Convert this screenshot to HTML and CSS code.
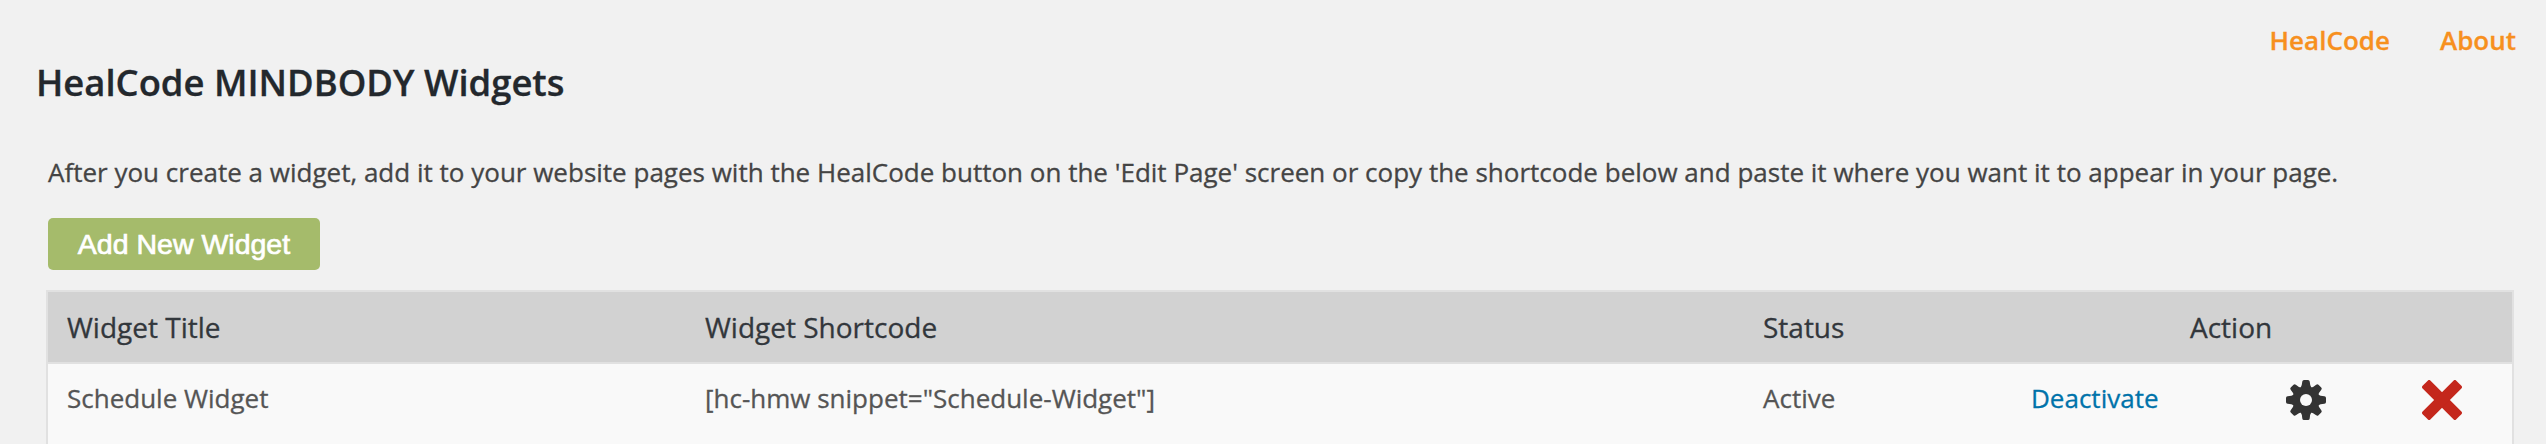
FILE: index.html
```
<!DOCTYPE html>
<html lang="en"><head><meta charset="utf-8"><title>HealCode MINDBODY Widgets</title><link rel="stylesheet" href="styles.css"></head>
<body>
<header class="header"><h1 class="title">HealCode MINDBODY Widgets</h1><nav class="nav"><a href="#">HealCode</a><a href="#">About</a></nav></header>
<main class="main">
<p class="intro">After you create a widget, add it to your website pages with the HealCode button on the 'Edit Page' screen or copy the shortcode below and paste it where you want it to appear in your page.</p>
<a class="add" href="#">Add New Widget</a>
<section class="table">
<div class="row head"><span>Widget Title</span><span>Widget Shortcode</span><span>Status</span><span class="action">Action</span></div>
<div class="row item"><span>Schedule Widget</span><span>[hc-hmw snippet="Schedule-Widget"]</span><span>Active</span><a class="deactivate" href="#">Deactivate</a>
<svg class="icon" viewBox="-20 -20 40 40"><g fill="#333"><circle r="13.6"/><g id="teeth"><path id="tooth" d="M-5.5 -12Q-4 -14 -3.7 -18.4Q-3.5 -20 -2 -20H2Q3.5 -20 3.7 -18.4Q4 -14 5.5 -12V0H-5.5Z"/><use href="#tooth" transform="rotate(90)"/><use href="#tooth" transform="rotate(180)"/><use href="#tooth" transform="rotate(270)"/></g><use href="#teeth" transform="rotate(45) scale(.98)"/></g><circle r="6" fill="#f9f9f9"/></svg>
<svg class="icon" viewBox="-20 -20 40 40"><g fill="#c4271c" transform="rotate(45)"><rect x="-23.8" y="-5.6" width="47.6" height="11.2" rx="2"/><rect x="-5.6" y="-23.8" width="11.2" height="47.6" rx="2"/></g></svg></div>
</section>
</main>
</body></html>
```
FILE: styles.css
```
* { box-sizing: border-box; }
body { margin: 0; height: 444px; overflow: hidden; background: #f1f1f1; color: #444; font: 26px/40px "Open Sans", sans-serif; -webkit-text-stroke: .3px; }
a { text-decoration: none; }
.header { display: flex; justify-content: space-between; height: 120px; padding: 20px 30px 0 36px; }
.title { margin: 40px 0 0; font-size: 36.4px; line-height: 44px; font-weight: 600; color: #23282d; white-space: nowrap; }
.nav { display: flex; gap: 50px; font-weight: 600; }
.nav a { color: #f7901e; }
.main { padding: 32px 32px 0 46px; }
.intro { margin: 0 0 26px 2px; white-space: nowrap; letter-spacing: .003px; }
.add { display: flex; align-items: center; justify-content: center; width: 272px; height: 52px; margin-left: 2px; border-radius: 5px; background: #a5bb6b; color: #fff; font: 28.5px "Liberation Sans", sans-serif; -webkit-text-stroke: .7px; }
.table { margin-top: 20px; height: 154px; border: 2px solid #e1e1e1; border-bottom: 0; background: #f9f9f9; }
.row { display: grid; grid-template-columns: 638px 1058px 268px 255px 136px 40px; padding-left: 19px; align-items: center; white-space: nowrap; }
.head { height: 72px; background: #d2d2d2; color: #32373c; font-size: 28px; border-bottom: 2px solid #e1e1e1; }
.head .action { padding-left: 159px; }
.item { height: 72px; color: #555; }
.item span, .item a { margin-bottom: 5px; }
.deactivate { color: #0073aa; }
.icon { width: 40px; height: 40px; }
```
